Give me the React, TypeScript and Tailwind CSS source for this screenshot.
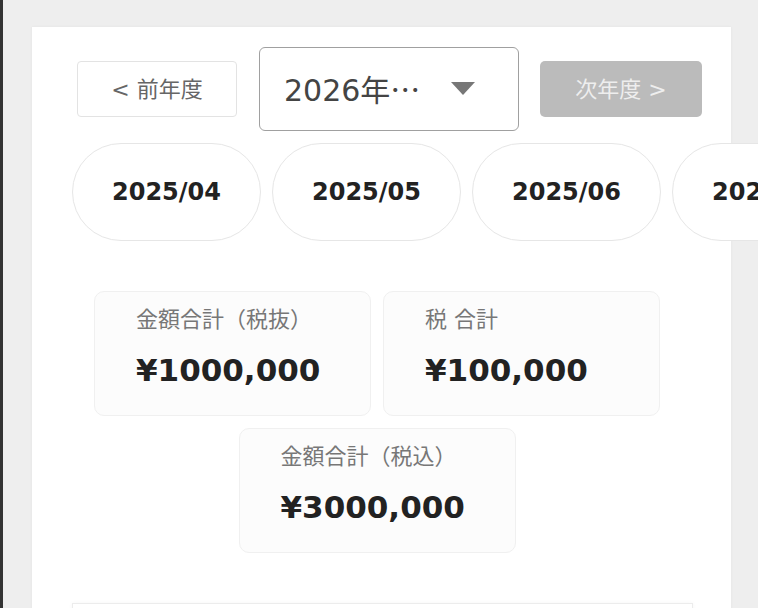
const months = ['2025/04', '2025/05', '2025/06', '2025/07']

const totals = [
  { label: '金額合計（税抜）', value: '¥1000,000' },
  { label: '税 合計', value: '¥100,000' },
  { label: '金額合計（税込）', value: '¥3000,000' }
]

const font = 'font-["DejaVu_Sans","Noto_Sans_CJK_JP",sans-serif]'

function TotalCard({ label, value }: { label: string; value: string }) {
  return (
    <div className="w-[277px] h-[125px] pl-[41px] pt-[12px] rounded-[10px] bg-[#fcfcfc] border border-[#f0f0f0]">
      <div className="text-[22px] leading-[32px] text-[#777]">{label}</div>
      <div className="mt-[14px] text-[31px] leading-[40px] font-bold text-[#222]">{value}</div>
    </div>
  )
}

export default function App() {
  return (
    <div className={`h-[608px] overflow-hidden bg-[#eee] flex ${font}`}>
      <div className="w-[3px] shrink-0 bg-[#333]" />
      <div className="ml-[29px] mt-[27px] w-[699px] shrink-0 h-[800px] bg-white pl-[40px] pr-[38px] pt-[20px] shadow-[0_0_3px_rgba(0,0,0,0.05)]">
        {/* 年度切替 */}
        <div className="flex items-center">
          <button className="ml-[5px] w-[160px] h-[56px] shrink-0 rounded-[4px] border border-[#e3e3e3] bg-white text-[22px] text-[#666]">
            &lt; 前年度
          </button>
          <div className="ml-[22px] w-[260px] h-[84px] shrink-0 rounded-[6px] border border-[#a0a0a0] flex items-center pl-[24px] pr-[43px] justify-between">
            <span className="text-[30px] text-[#444]">
              2026<span className='font-["Noto_Sans_CJK_JP"]'>年…</span>
            </span>
            <svg width="24" height="14" viewBox="0 0 24 14">
              <path d="M0 0 L24 0 L12 13 Z" fill="#777" />
            </svg>
          </div>
          <button className="ml-[21px] w-[162px] h-[56px] shrink-0 rounded-[5px] bg-[#bbb] text-[22px] text-[#eee]">
            次年度 &gt;
          </button>
        </div>

        {/* 月タブ */}
        <div className="mt-[12px] flex gap-[11px]">
          {months.map(m => (
            <div
              key={m}
              className="w-[189px] h-[98px] shrink-0 rounded-full border border-[#e6e6e6] bg-white flex items-center justify-center text-[24px] font-bold text-[#222]"
            >
              {m}
            </div>
          ))}
        </div>

        {/* 合計 */}
        <div className="mt-[50px] ml-[16px] w-[578px] flex flex-wrap justify-center gap-[12px]">
          {totals.map(t => (
            <TotalCard key={t.label} label={t.label} value={t.value} />
          ))}
        </div>

        <div className="mt-[50px] h-[120px] border border-[#ececec] bg-white shadow-[0_0_4px_rgba(0,0,0,0.04)]" />
      </div>
    </div>
  )
}
